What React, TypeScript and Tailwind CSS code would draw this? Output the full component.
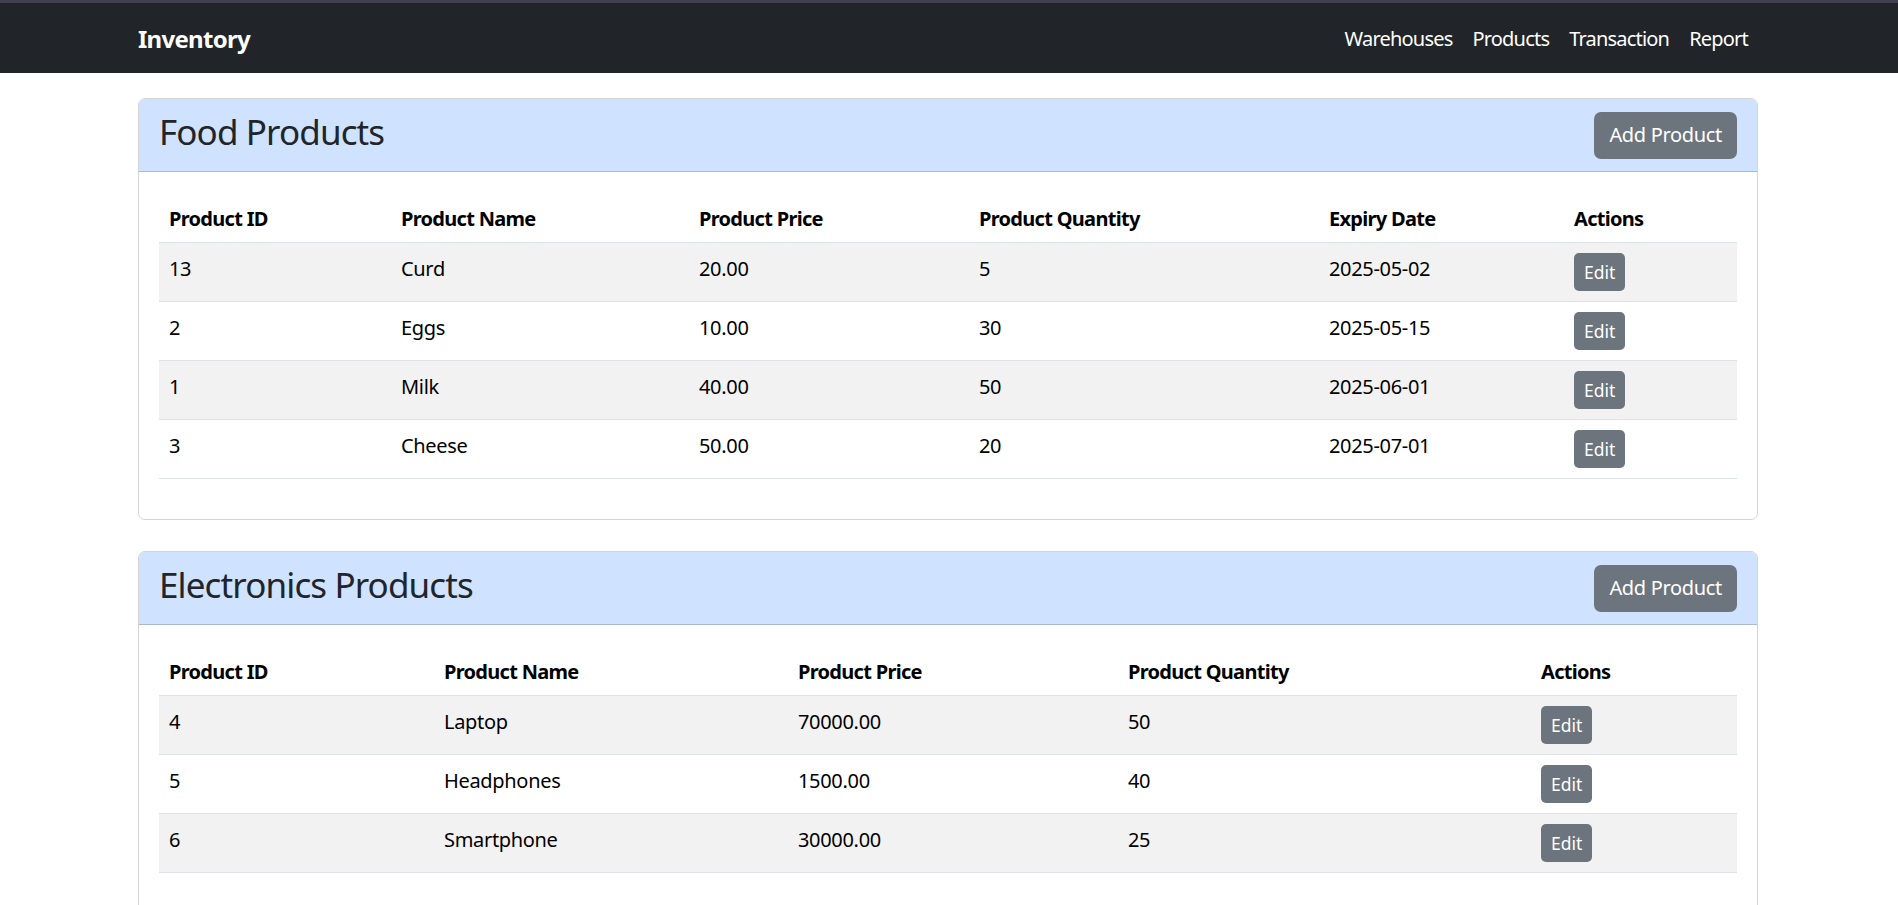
import React from 'react';

interface Column {
  label: string;
  width: string;
}

interface Product {
  id: number;
  name: string;
  price: string;
  qty: number;
  expiry?: string;
}

const foodColumns: Column[] = [
  { label: 'Product ID', width: 'w-[232px]' },
  { label: 'Product Name', width: 'w-[298px]' },
  { label: 'Product Price', width: 'w-[280px]' },
  { label: 'Product Quantity', width: 'w-[350px]' },
  { label: 'Expiry Date', width: 'w-[245px]' },
  { label: 'Actions', width: 'w-[173px]' },
];

const electronicsColumns: Column[] = [
  { label: 'Product ID', width: 'w-[275px]' },
  { label: 'Product Name', width: 'w-[354px]' },
  { label: 'Product Price', width: 'w-[330px]' },
  { label: 'Product Quantity', width: 'w-[413px]' },
  { label: 'Actions', width: 'w-[206px]' },
];

const foodProducts: Product[] = [
  { id: 13, name: 'Curd', price: '20.00', qty: 5, expiry: '2025-05-02' },
  { id: 2, name: 'Eggs', price: '10.00', qty: 30, expiry: '2025-05-15' },
  { id: 1, name: 'Milk', price: '40.00', qty: 50, expiry: '2025-06-01' },
  { id: 3, name: 'Cheese', price: '50.00', qty: 20, expiry: '2025-07-01' },
];

const electronicsProducts: Product[] = [
  { id: 4, name: 'Laptop', price: '70000.00', qty: 50 },
  { id: 5, name: 'Headphones', price: '1500.00', qty: 40 },
  { id: 6, name: 'Smartphone', price: '30000.00', qty: 25 },
];

function Navbar() {
  return (
    <div>
      <div className="h-[3px] bg-[#433f50]" />
      <nav className="h-[70px] bg-[#212529]">
        <div className="ml-[138px] flex h-full w-[1620px] items-center justify-between">
          <a className="text-[24px] font-bold leading-[37px] tracking-[-0.03em] text-white">Inventory</a>
          <div className="flex items-center pt-[2px]">
            {['Warehouses', 'Products', 'Transaction', 'Report'].map(l => (
              <a key={l} className="px-[10px] text-[20px] leading-[30px] tracking-[-0.04em] text-white">
                {l}
              </a>
            ))}
          </div>
        </div>
      </nav>
    </div>
  );
}

function ProductCard({ title, columns, products, showExpiry }: { title: string; columns: Column[]; products: Product[]; showExpiry: boolean }) {
  const cell = 'px-[10px] pt-[11px] pb-[9px] align-top text-[20px] leading-[30px]';
  return (
    <div className="overflow-hidden rounded-[7px] border border-[#d4d4d4] bg-white">
      <div className="flex h-[73px] items-center justify-between border-b border-[#abb9d0] bg-[#cfe2ff] px-[20px]">
        <h2 className="mb-[7px] text-[35px] leading-[44px] tracking-[-0.025em] text-[#212529]">{title}</h2>
        <button className="h-[47px] rounded-[7px] bg-[#6c757d] px-[15px] text-[20px] leading-[30px] text-white">
          Add Product
        </button>
      </div>
      <div className="p-[20px]">
        <table className="mb-[20px] w-full table-fixed border-collapse text-left text-black">
          <thead>
            <tr className="border-b border-[#dee2e6]">
              {columns.map(c => (
                <th
                  key={c.label}
                  className={`${c.width} px-[10px] pt-[12px] pb-[8px] align-top text-[20px] font-bold leading-[30px] tracking-[-0.035em]`}>
                  {c.label}
                </th>
              ))}
            </tr>
          </thead>
          <tbody>
            {products.map((p, i) => (
              <tr key={p.id} className={`border-b border-[#dee2e6] ${i % 2 === 0 ? 'bg-[#f2f2f2]' : 'bg-white'}`}>
                <td className={cell}>{p.id}</td>
                <td className={cell}>{p.name}</td>
                <td className={cell}>{p.price}</td>
                <td className={cell}>{p.qty}</td>
                {showExpiry && <td className={cell}>{p.expiry}</td>}
                <td className="px-[10px] py-[10px] align-top">
                  <button className="block h-[38px] rounded-[5px] bg-[#6c757d] px-[10px] text-[17.5px] leading-[26px] tracking-normal text-white">
                    Edit
                  </button>
                </td>
              </tr>
            ))}
          </tbody>
        </table>
      </div>
    </div>
  );
}

export default function App() {
  return (
    <div className="min-h-screen bg-white font-['Segoe_UI','Noto_Sans',sans-serif] tracking-[-0.02em] text-[#212529]">
      <Navbar />
      <main className="ml-[138px] flex w-[1620px] flex-col gap-[31px] pt-[25px]">
        <ProductCard title="Food Products" columns={foodColumns} products={foodProducts} showExpiry={true} />
        <ProductCard title="Electronics Products" columns={electronicsColumns} products={electronicsProducts} showExpiry={false} />
      </main>
    </div>
  );
}
